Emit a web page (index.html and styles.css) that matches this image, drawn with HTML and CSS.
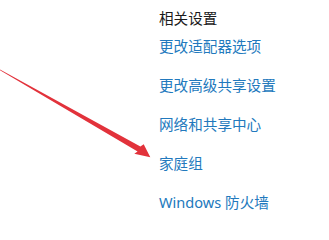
FILE: index.html
```html
<!DOCTYPE html>
<html lang="zh-CN">
<head>
<meta charset="utf-8">
<title>相关设置</title>
<link rel="stylesheet" href="styles.css">
</head>
<body>
<div class="page">
  <section class="related">
    <h2 class="title">相关设置</h2>
    <ul class="links">
      <li><a class="link" href="#">更改适配器选项</a></li>
      <li><a class="link" href="#">更改高级共享设置</a></li>
      <li><a class="link" href="#">网络和共享中心</a></li>
      <li><a class="link" href="#">家庭组</a></li>
      <li><a class="link" href="#">Windows 防火墙</a></li>
    </ul>
  </section>
  <svg class="arrow" width="329" height="215" viewBox="0 0 329 215" aria-hidden="true">
    <polygon points="-0.4,69.4 0.4,70.6 137.6,151.4 134.3,153.8 150.3,157.2 143.7,144.3 140.4,146.6" fill="#e2323b"/>
  </svg>
</div>
</body>
</html>
```
FILE: styles.css
```css
html, body {
  margin: 0;
  padding: 0;
  background: #ffffff;
}
.page {
  position: relative;
  width: 329px;
  height: 215px;
  overflow: hidden;
  font-family: "Noto Sans", "Noto Sans CJK SC", sans-serif;
}
.related {
  padding: 8px 0 0 159px;
}
.title {
  margin: 0;
  font-size: 14.6px;
  font-weight: normal;
  line-height: 20px;
  height: 20px;
  color: #1b1b1b;
}
.links {
  list-style: none;
  margin: 8px 0 0;
  padding: 0;
  display: flex;
  flex-direction: column;
  gap: 19px;
}
.links li {
  height: 20px;
  line-height: 20px;
}
.link {
  font-size: 14.6px;
  color: #2279bd;
  text-decoration: none;
  white-space: nowrap;
}
.arrow {
  position: absolute;
  left: 0;
  top: 0;
  filter: blur(0.4px);
}
```
